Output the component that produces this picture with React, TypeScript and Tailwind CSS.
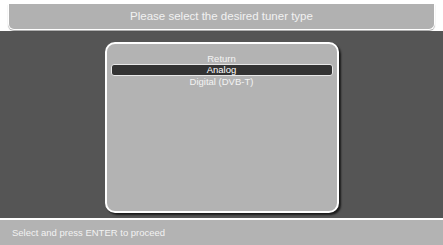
import React from 'react';

const ITEMS = ['Return', 'Analog', 'Digital (DVB-T)'];
const SELECTED = 1;

export default function App(): React.JSX.Element {
  return (
    <div
      className="flex h-[245px] w-[443px] flex-col overflow-hidden bg-[#555555] text-white"
      style={{ fontFamily: '"Liberation Sans", Arial, sans-serif' }}
    >
      {/* title strip */}
      <div className="h-[31px] shrink-0 bg-white px-[8px] pt-[4px]">
        <div className="flex h-[26px] items-center justify-center rounded-b-[6px] border-x border-b border-white bg-[#b1b1b1] shadow-[0_1px_1px_rgba(0,0,0,0.35)]">
          <span className="text-[11.5px] text-[#f2f2f2]">Please select the desired tuner type</span>
        </div>
      </div>

      {/* menu area */}
      <div className="flex flex-1 justify-center pt-[11px]">
        <div className="flex h-[171px] w-[234px] flex-col rounded-[10px] border-2 border-white bg-[#b3b3b3] px-[4px] pt-[9px] shadow-[2px_2px_2px_rgba(0,0,0,0.7)]">
          {ITEMS.map((item, i) => (
            <div
              key={item}
              className={
                'flex items-center justify-center text-[9.5px] leading-none ' +
                (i === SELECTED
                  ? 'h-[12px] rounded-[3px] border border-[#e8e8e8] bg-[#333333] text-white'
                  : 'h-[11px] text-[#f4f4f4]')
              }
            >
              {item}
            </div>
          ))}
        </div>
      </div>

      {/* hint bar */}
      <div className="mt-[4px] h-[2px] shrink-0 bg-white" />
      <div className="flex h-[25px] shrink-0 items-center bg-[#b3b3b3] px-[12px] pt-[2px]">
        <span className="text-[9.5px] text-[#f2f2f2]">Select and press ENTER to proceed</span>
      </div>
    </div>
  );
}
